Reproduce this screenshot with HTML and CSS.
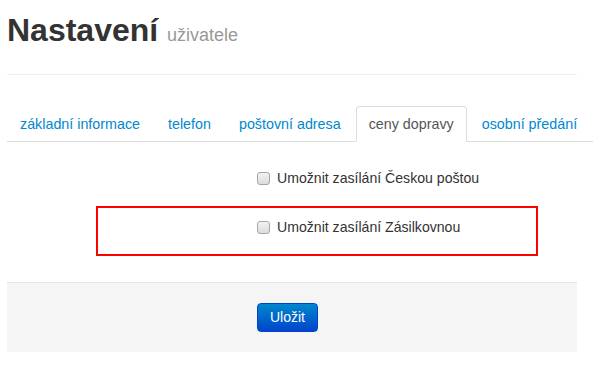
FILE: index.html
```html
<!DOCTYPE html>
<html lang="cs">
<head>
    <meta charset="UTF-8">
    <title>Nastavení uživatele</title>
    <link rel="stylesheet" href="styles.css">
</head>
<body>
    <div class="container">
        <div class="page-header">
            <h1>Nastavení <small>uživatele</small></h1>
        </div>

        <ul class="nav-tabs">
            <li><a href="#">základní informace</a></li>
            <li><a href="#">telefon</a></li>
            <li><a href="#">poštovní adresa</a></li>
            <li class="active"><a href="#">ceny dopravy</a></li>
            <li><a href="#">osobní předání</a></li>
        </ul>

        <form class="settings-form">
            <div class="control-group">
                <label class="checkbox"><input type="checkbox"> Umožnit zasílání Českou poštou</label>
            </div>
            <div class="control-group highlighted">
                <label class="checkbox"><input type="checkbox"> Umožnit zasílání Zásilkovnou</label>
            </div>
            <div class="form-actions">
                <button type="submit" class="btn-primary">Uložit</button>
            </div>
        </form>
    </div>
</body>
</html>
```

FILE: styles.css
```css
* {
    margin: 0;
    padding: 0;
    box-sizing: border-box;
}

body {
    font-family: "Liberation Sans", Arial, sans-serif;
    font-size: 14px;
    line-height: 18px;
    color: #333;
    background-color: #fff;
}

.container {
    width: 570px;
    margin-left: 7px;
    padding-top: 12px;
}

.page-header {
    padding-bottom: 21px;
    border-bottom: 1px solid #eee;
}

.page-header h1 {
    font-size: 32px;
    line-height: 36px;
    font-weight: bold;
    color: #333;
}

.page-header h1 small {
    font-size: 18px;
    font-weight: normal;
    color: #999;
}

.nav-tabs {
    list-style: none;
    display: flex;
    margin-top: 31px;
    margin-right: -16px;
    border-bottom: 1px solid #ddd;
}

.nav-tabs li {
    margin-right: 2px;
    margin-bottom: -1px;
}

.nav-tabs a {
    display: block;
    padding: 8px 12px;
    font-size: 14.3px;
    line-height: 18px;
    border: 1px solid transparent;
    border-radius: 4px 4px 0 0;
    color: #0088cc;
    text-decoration: none;
}

.nav-tabs .active a {
    color: #555;
    background-color: #fff;
    border-color: #ddd #ddd transparent;
}

.settings-form {
    padding-top: 27px;
}

.control-group {
    padding-left: 250px;
}

.control-group.highlighted {
    margin: 19px 39px 0 89px;
    padding: 10px 0 18px 159px;
    border: 2px solid #f00;
}

.checkbox {
    display: flex;
    align-items: center;
    gap: 7px;
    font-size: 14.1px;
}

.checkbox input {
    appearance: none;
    width: 13px;
    height: 13px;
    border: 1px solid #a6a6a6;
    border-radius: 3px;
    background-image: linear-gradient(to bottom, #f2f2f2, #dcdcdc);
}

.form-actions {
    margin-top: 26px;
    padding: 20px 20px 20px 250px;
    background-color: #f5f5f5;
    border-top: 1px solid #e5e5e5;
}

.btn-primary {
    font-family: inherit;
    font-size: 14px;
    line-height: 17px;
    padding: 5px 12px;
    color: #fff;
    background-image: linear-gradient(to bottom, #0088cc, #0044cc);
    border: 1px solid #0044cc;
    border-radius: 4px;
    cursor: pointer;
}
```
